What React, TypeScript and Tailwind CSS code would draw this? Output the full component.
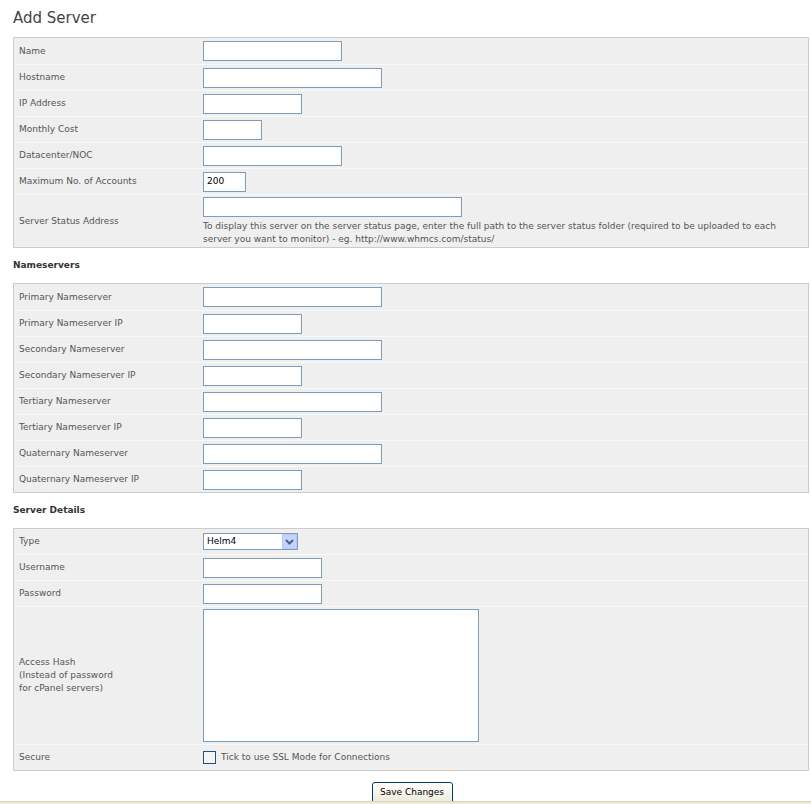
import React from "react";

const F = { fontFamily: "'DejaVu Sans', Verdana, sans-serif" };

function Inp({ w, v }: { w: number; v?: string }) {
  return (
    <div className="h-[20px] border border-[#7f9db9] bg-white text-[9px] text-black pl-[3px] flex items-center" style={{ width: w }}>{v}</div>
  );
}

function Row({ label, children, h = 26 }: { label: React.ReactNode; children?: React.ReactNode; h?: number }) {
  return (
    <div className="flex items-center border-t border-[#f8f8f8] first:border-t-0" style={{ height: h }}>
      <div className="w-[189px] pl-[5px] text-[9px] text-[#555] leading-[13px]">{label}</div>
      <div className="flex-1">{children}</div>
    </div>
  );
}

function Box({ children, cls }: { children: React.ReactNode; cls?: string }) {
  return <div className={"ml-[13px] mr-[2px] border border-[#cccccc] bg-[#efefef] " + (cls || "")}>{children}</div>;
}

function H({ t }: { t: string }) {
  return <div className="ml-[13px] text-[9px] font-bold text-[#333] h-[35px] flex items-center">{t}</div>;
}

export default function App() {
  return (
    <div className="w-[811px] h-[804px] bg-white overflow-hidden relative" style={F}>
      <div className="pl-[13px] pt-[7px] h-[37px] text-[15px] text-[#444]">Add Server</div>
      <Box>
        <Row label="Name"><Inp w={139} /></Row>
        <Row label="Hostname"><Inp w={179} /></Row>
        <Row label="IP Address"><Inp w={99} /></Row>
        <Row label="Monthly Cost"><Inp w={59} /></Row>
        <Row label="Datacenter/NOC"><Inp w={139} /></Row>
        <Row label="Maximum No. of Accounts"><Inp w={43} v="200" /></Row>
        <Row label="Server Status Address" h={53}>
          <Inp w={259} />
          <div className="text-[9px] text-[#555] leading-[13px] mt-[3px] pr-[4px]">To display this server on the server status page, enter the full path to the server status folder (required to be uploaded to each server you want to monitor) - eg. http://www.whmcs.com/status/</div>
        </Row>
      </Box>
      <H t="Nameservers" />
      <Box>
        <Row label="Primary Nameserver"><Inp w={179} /></Row>
        <Row label="Primary Nameserver IP"><Inp w={99} /></Row>
        <Row label="Secondary Nameserver"><Inp w={179} /></Row>
        <Row label="Secondary Nameserver IP"><Inp w={99} /></Row>
        <Row label="Tertiary Nameserver"><Inp w={179} /></Row>
        <Row label="Tertiary Nameserver IP"><Inp w={99} /></Row>
        <Row label="Quaternary Nameserver"><Inp w={179} /></Row>
        <Row label="Quaternary Nameserver IP"><Inp w={99} /></Row>
      </Box>
      <H t="Server Details" />
      <Box>
        <Row label="Type" h={25}>
          <div className="w-[95px] h-[17px] border border-[#7f9db9] bg-white flex items-center justify-between text-[9px] pl-[3px]">
            Helm4
            <div className="w-[15px] h-[15px] bg-[#c3d3fd] border border-[#b7c9f5] flex items-center justify-center">
              <svg width="9" height="6" viewBox="0 0 9 6"><path d="M1 1l3.5 3.5L8 1" stroke="#4d6185" strokeWidth="2" fill="none" /></svg>
            </div>
          </div>
        </Row>
        <Row label="Username"><Inp w={119} /></Row>
        <Row label="Password"><Inp w={119} /></Row>
        <Row label={<>Access Hash<br />(Instead of password<br />for cPanel servers)</>} h={138}>
          <div className="w-[276px] h-[133px] border border-[#7f9db9] bg-white" />
        </Row>
        <Row label="Secure" h={26}>
          <div className="flex items-center gap-[5px] text-[9px] text-[#555]">
            <div className="w-[13px] h-[13px] border border-[#1c5180] bg-[#f4f4f0]" />
            Tick to use SSL Mode for Connections
          </div>
        </Row>
      </Box>
      <div className="flex justify-center mt-[11px] pl-[13px]">
        <div className="w-[81px] h-[22px] border border-[#003c74] rounded-[3px] bg-gradient-to-b from-white to-[#ece9d8] text-[9px] flex items-center justify-center">Save Changes</div>
      </div>
      <div className="absolute left-0 right-0 bottom-0 h-[3px] bg-[#ece9d8] border-t border-[#d8d4c4]" />
    </div>
  );
}
